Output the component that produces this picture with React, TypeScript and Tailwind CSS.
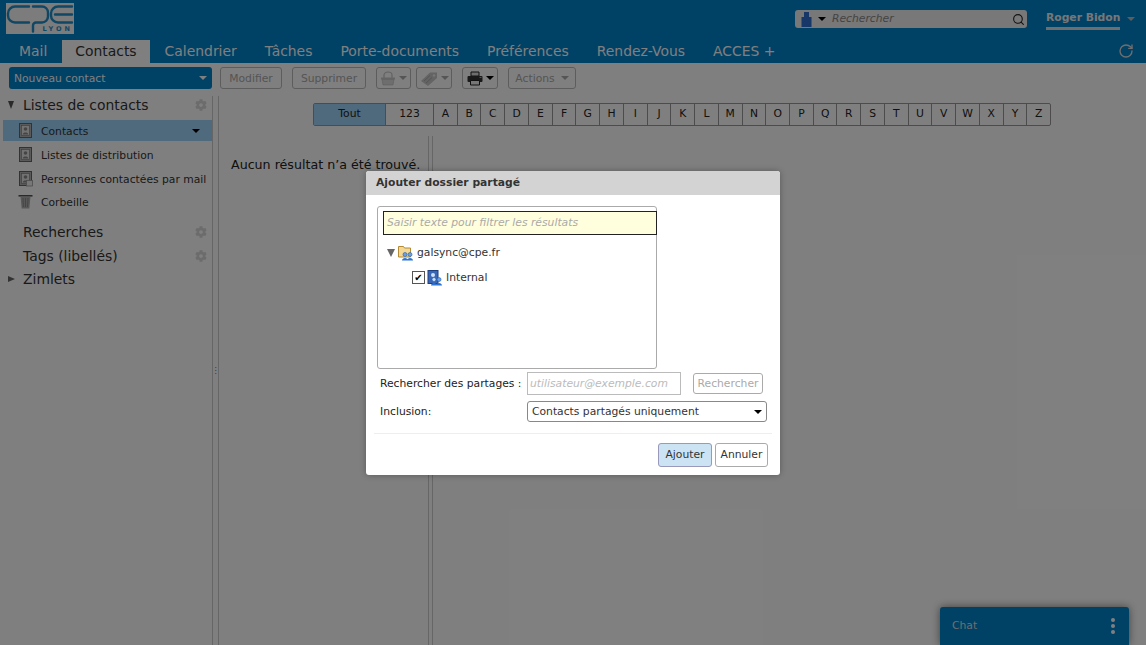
import { RotateCw, Search } from "lucide-react";
import { FaCog } from "react-icons/fa";

const tabs = ["Mail", "Contacts", "Calendrier", "Tâches", "Porte-documents", "Préférences", "Rendez-Vous", "ACCES +"];
const letters = "ABCDEFGHIJKLMNOPQRSTUVWXYZ".split("");

function Caret({ className = "border-t-black" }: { className?: string }) {
  return <span className={`inline-block w-0 h-0 border-x-[4px] border-x-transparent border-t-[4px] ${className}`} />;
}

function BookIcon({ badge = false }: { badge?: boolean }) {
  return (
    <svg width="15" height="16" viewBox="0 0 15 16" className="shrink-0">
      <rect x="1.500" y="0.500" width="12" height="14" fill="#b5b5b5" stroke="#666" />
      <rect x="3.500" y="2.500" width="8" height="10" fill="#e4e4e4" stroke="#777" strokeWidth="0.6" />
      <circle cx="7.500" cy="6" r="1.800" fill="#8a8a8a" />
      <path d="M4.700 11.500c.3-2.600 5.300-2.600 5.600 0z" fill="#8a8a8a" />
      {badge && <rect x="8.500" y="9.500" width="6" height="5.500" fill="#f0f0f0" stroke="#999" strokeWidth="0.8" />}
    </svg>
  );
}

function TrashIcon() {
  return (
    <svg width="15" height="15" viewBox="0 0 15 15" className="shrink-0">
      <path d="M0.500 1h14v1.600H0.500z" fill="#555" />
      <path d="M2.500 2.600h10l-1.200 11.900H3.700z" fill="#b0b0b0" />
      <path d="M5 4l.4 9M7.500 4v9M10 4l-.4 9" stroke="#888" strokeWidth="0.9" />
    </svg>
  );
}

function BasketIcon() {
  return (
    <svg width="16" height="15" viewBox="0 0 16 15" className="shrink-0">
      <path d="M4 7V4a4 3 0 0 1 8 0v3" stroke="#c4c4c4" strokeWidth="1.200" fill="none" />
      <path d="M1 6.500h14v2H1z" fill="#c8c8c8" />
      <path d="M2 8.500h12l-1 5.500H3z" fill="#dcdcdc" stroke="#bbb" strokeWidth="0.6" />
    </svg>
  );
}

function TagIcon() {
  return (
    <svg width="18" height="15" viewBox="0 0 18 15" className="shrink-0">
      <path d="M1 10l9-8.500h7v5.500l-9 8z" fill="#c8c8c8" />
      <circle cx="14" cy="4.500" r="1.200" fill="#eee" />
      <path d="M4 10l6-5.500M6 12l6-5.500" stroke="#aaa" strokeWidth="1" />
    </svg>
  );
}

function PrintIcon() {
  return (
    <svg width="16" height="15" viewBox="0 0 16 15" className="shrink-0">
      <path d="M4 1h8v4H4z" fill="#ddd" stroke="#222" />
      <rect x="0.500" y="5" width="15" height="6" rx="1" fill="#333" />
      <path d="M3.500 9.500h9v4.500h-9z" fill="#eee" stroke="#222" />
      <path d="M12.500 6.500h2" stroke="#7c7" />
    </svg>
  );
}

function SharedIcon({ folder = false }: { folder?: boolean }) {
  return (
    <svg width="15" height="16" viewBox="0 0 15 16" className="shrink-0">
      {folder ? (
        <path d="M0.500 1.500h5l1 1.500h6v9h-12z" fill="#f5d894" stroke="#b58a35" />
      ) : (
        <rect x="1" y="0.500" width="10" height="13" fill="#3a67b5" stroke="#1d3f80" />
      )}
      {!folder && <circle cx="6" cy="5" r="2" fill="#cfe0f7" />}
      <circle cx="7" cy="9.500" r="2" fill={folder ? "#6ba0e6" : "#cfe0f7"} stroke="#1d5cb0" strokeWidth="0.6" />
      <circle cx="12" cy="9.500" r="2" fill="#6ba0e6" stroke="#1d5cb0" strokeWidth="0.6" />
      <path d="M4 15.500c0-3.500 6-3.500 6 0zM9 15.500c0-3.500 6-3.500 6 0z" fill="#2b74d1" />
    </svg>
  );
}

function SideRow({ label, icon, active, className = "" }: { label: string; icon: React.ReactNode; active?: boolean; className?: string }) {
  return (
    <div className={`flex items-center h-[21px] pl-[15px] ml-[3px] text-[10.750px] text-[#333] ${active ? "bg-[#9fd3fa]" : ""} ${className}`}>
      <span className="w-[23px] flex">{icon}</span>
      <span className="flex-1 whitespace-nowrap pt-[3px]">{label}</span>
      {active && <span className="mr-[12px] flex"><Caret /></span>}
    </div>
  );
}

function SideHeader({ label, arrow, gear = true }: { label: string; arrow?: "down" | "right"; gear?: boolean }) {
  return (
    <div className="flex items-center h-[24px] pl-[8px] pr-[5px] text-[13.900px] text-[#333]">
      <span className="w-[15px] flex text-[#555]">
        {arrow === "down" && <span className="w-0 h-0 border-x-[3.500px] border-x-transparent border-t-[8px] border-t-[#555]" />}
        {arrow === "right" && <span className="w-0 h-0 border-y-[3.500px] border-y-transparent border-l-[7px] border-l-[#666]" />}
      </span>
      <span className="flex-1 whitespace-nowrap">{label}</span>
      {gear && <FaCog size={12} className="text-[#d8d8d8]" />}
    </div>
  );
}

function ToolBtn({ children, className = "" }: { children: React.ReactNode; className?: string }) {
  return (
    <div className={`h-[22px] flex items-center justify-center gap-[3px] border border-[#bbb] rounded-[3px] text-[10.750px] text-[#aaa] ${className}`}>
      {children}
    </div>
  );
}

export default function App() {
  return (
    <div className="relative w-[1146px] h-[645px] overflow-hidden bg-white font-['DejaVu_Sans',sans-serif]">
      <header className="h-[63px] bg-[#0082cc] flex flex-col">
        <div className="h-[40px] flex items-start pl-[6px]">
          <div className="mt-[3px] w-[68px] h-[31px] bg-[#f8f8f8] relative">
            <svg width="68" height="31" viewBox="0 0 68 31" fill="none" stroke="#1f8fc8" strokeWidth="2.400" strokeLinecap="round">
              <path d="M23 3.500H9a7 7 0 0 0-7 7v2a7 7 0 0 0 7 7h14" />
              <path d="M27 3.500H36a6 6 0 0 1 6 6v4a6 6 0 0 1-6 6H30a3 3 0 0 0-3 3v6" />
              <path d="M66 3.500H52a7 7 0 0 0-7 7v2a7 7 0 0 0 7 7h14M49 11.500h17" />
            </svg>
            <span className="absolute right-[1px] bottom-[1px] text-[6.500px] leading-[7px] tracking-[3px] font-bold text-[#1f8fc8]">LYON</span>
          </div>
          <div className="ml-auto mt-[10px] w-[232px] h-[18px] bg-[#f0f0f0] rounded-[3px] flex items-center pl-[6px] pr-[2px]">
            <svg width="11" height="15" viewBox="0 0 11 15"><path d="M3 0h5v5h2.500v10H.5V5H3z" fill="#2f6fd0" /></svg>
            <span className="ml-[6px] flex"><Caret /></span>
            <span className="ml-[6px] flex-1 text-[10.750px] italic text-[#888]">Rechercher</span>
            <Search size={13} className="text-[#222]" strokeWidth={2} />
          </div>
          <div className="ml-[19px] mt-[10px] mr-[13px] flex items-start w-[87px]">
            <span className="text-[10.750px] font-bold text-[#eee] border-b-[3px] border-[#ddd] pb-[2px] leading-[15px] whitespace-nowrap">Roger Bidon</span>
            <span className="ml-[7px] mt-[7px] flex"><Caret className="border-t-[#bbb]" /></span>
          </div>
        </div>
        <nav className="h-[23px] flex items-end pl-[5px]">
          {tabs.map((t) =>
            t === "Contacts" ? (
              <div key={t} className="h-[23px] mx-px px-[13px] bg-white text-[13.920px] leading-[23px] text-[#333]">{t}</div>
            ) : (
              <div key={t} className="h-[23px] px-[14px] text-[13.920px] leading-[23px] text-white">{t}</div>
            )
          )}
          <RotateCw size={16} className="ml-auto mr-[12px] mb-[4px] text-[#ddd]" />
        </nav>
      </header>

      <div className="h-[30px] flex items-center pl-[9px] text-[10.750px]">
        <div className="w-[203px] h-[22px] bg-[#0082cc] rounded-[3px] flex items-center justify-between px-[5px] text-white">
          <span className="pt-[2px]">Nouveau contact</span>
          <Caret className="border-t-white" />
        </div>
        <ToolBtn className="ml-[8px] w-[62px]"><span className="pt-[2px]">Modifier</span></ToolBtn>
        <ToolBtn className="ml-[10px] w-[74px]"><span className="pt-[2px]">Supprimer</span></ToolBtn>
        <ToolBtn className="ml-[10px] w-[35px]"><BasketIcon /><Caret className="border-t-[#aaa]" /></ToolBtn>
        <ToolBtn className="ml-[5px] w-[36px]"><TagIcon /><Caret className="border-t-[#aaa]" /></ToolBtn>
        <ToolBtn className="ml-[10px] w-[36px]"><PrintIcon /><Caret /></ToolBtn>
        <ToolBtn className="ml-[10px] w-[68px] gap-[6px]"><span className="pt-[2px]">Actions</span><Caret className="border-t-[#aaa]" /></ToolBtn>
      </div>

      <div className="flex h-[552px]">
        <aside className="w-[212px]">
          <SideHeader label="Listes de contacts" arrow="down" />
          <div className="mt-[3px]">
            <SideRow label="Contacts" icon={<BookIcon />} active className="mb-[3px]" />
            <SideRow label="Listes de distribution" icon={<BookIcon />} className="mb-[3px]" />
            <SideRow label="Personnes contactées par mail" icon={<BookIcon badge />} className="mb-[2px]" />
            <SideRow label="Corbeille" icon={<TrashIcon />} />
          </div>
          <div className="mt-[8px]">
            <SideHeader label="Recherches" />
            <SideHeader label="Tags (libellés)" />
            <div className="-mt-px">
              <SideHeader label="Zimlets" arrow="right" gear={false} />
            </div>
          </div>
        </aside>
        <div className="w-[7px] mt-[3px] border-x border-[#ccc] flex items-center justify-center">
          <span className="text-[8px] leading-[3px] text-[#666]">⋮</span>
        </div>
        <main className="flex-1 flex flex-col">
          <div className="flex h-[23px] mt-[10px] ml-[94px] w-[738px] border border-[#999] rounded-[2px] text-[10.750px] text-[#222]">
            <div className="w-[72px] bg-[#9fd3fa] flex items-center justify-center border-r border-[#999]">Tout</div>
            <div className="w-[48px] flex items-center justify-center border-r border-[#999]">123</div>
            {letters.map((l) => (
              <div key={l} className="flex-1 flex items-center justify-center border-r border-[#999] last:border-r-0">{l}</div>
            ))}
          </div>
          <div className="flex flex-1 mt-[10px]">
            <div className="w-[209px] pl-[12px] pt-[21px] text-[12.650px] leading-[16px] text-[#222] whitespace-nowrap">Aucun résultat n’a été trouvé.</div>
            <div className="w-[5px] border-x border-[#ccc]" />
          </div>
        </main>
      </div>

      <div className="absolute left-[940px] top-[607px] w-[189px] h-[38px] bg-[#0082cc] rounded-t-[3px] shadow-[0_0_8px_rgba(0,0,0,0.5)] flex items-center justify-between pl-[12px] pr-[14px]">
        <span className="text-[10.750px] text-[#ddd]">Chat</span>
        <span className="flex flex-col gap-[2px]">
          <span className="w-[4px] h-[4px] rounded-full bg-white" />
          <span className="w-[4px] h-[4px] rounded-full bg-white" />
          <span className="w-[4px] h-[4px] rounded-full bg-white" />
        </span>
      </div>

      <div className="absolute inset-0 bg-black/50" />

      <div className="absolute left-[366px] top-[171px] w-[414px] h-[304px] bg-white rounded-[3px] shadow-[0_0_6px_rgba(0,0,0,0.3)] flex flex-col text-[10.750px] text-[#222]">
        <div className="h-[24px] bg-[#d3d3d3] rounded-t-[3px] pl-[10px] flex items-center font-bold text-[#333]">Ajouter dossier partagé</div>
        <div className="pt-[11px] pl-[11px] h-[174px]">
          <div className="w-[280px] h-[163px] border border-[#aaa] rounded-[3px] pt-[4px] pl-[5px]">
            <div className="w-[274px] h-[24px] border border-[#222] bg-[#ffffdd] pl-[3px] leading-[21px] italic text-[#aaa]">Saisir texte pour filtrer les résultats</div>
            <div className="flex items-center h-[17px] mt-[9px] ml-[4px]">
              <span className="w-0 h-0 border-x-[4px] border-x-transparent border-t-[8px] border-t-[#666]" />
              <span className="ml-[3px] flex"><SharedIcon folder /></span>
              <span className="ml-[4px] pt-px text-[#333]">galsync@cpe.fr</span>
            </div>
            <div className="flex items-center h-[17px] mt-[8px] ml-[29px]">
              <span className="w-[13px] h-[13px] border border-[#555] flex items-center justify-center text-[10px] leading-none text-black">✔</span>
              <span className="ml-[2px] flex"><SharedIcon /></span>
              <span className="ml-[4px] pt-px text-[#333]">Internal</span>
            </div>
          </div>
        </div>
        <div className="flex items-center h-[23px] pl-[14px] mt-[3px]">
          <span className="w-[147px] whitespace-nowrap pt-px">Rechercher des partages :</span>
          <div className="w-[154px] h-[23px] border border-[#bbb] pl-[2px] leading-[21px] italic text-[#bbb]">utilisateur@exemple.com</div>
          <div className="ml-[12px] w-[70px] h-[21px] border border-[#aaa] rounded-[3px] flex items-center justify-center pt-px text-[#aaa]">Rechercher</div>
        </div>
        <div className="flex items-center h-[21px] pl-[14px] mt-[6px]">
          <span className="w-[147px] pt-px">Inclusion:</span>
          <div className="w-[240px] h-[21px] border border-[#888] rounded-[3px] flex items-center justify-between pl-[4px] pr-[4px] text-[#333]">
            <span className="pt-px">Contacts partagés uniquement</span>
            <Caret />
          </div>
        </div>
        <div className="mx-[8px] mt-[11px] border-t border-[#eee]" />
        <div className="flex justify-end gap-[3px] pr-[12px] mt-[9px]">
          <div className="w-[54px] h-[24px] border border-[#99b] rounded-[3px] bg-[#cce3f3] flex items-center justify-center text-[#333]">Ajouter</div>
          <div className="w-[53px] h-[24px] border border-[#aaa] rounded-[3px] flex items-center justify-center text-[#333]">Annuler</div>
        </div>
      </div>
    </div>
  );
}
